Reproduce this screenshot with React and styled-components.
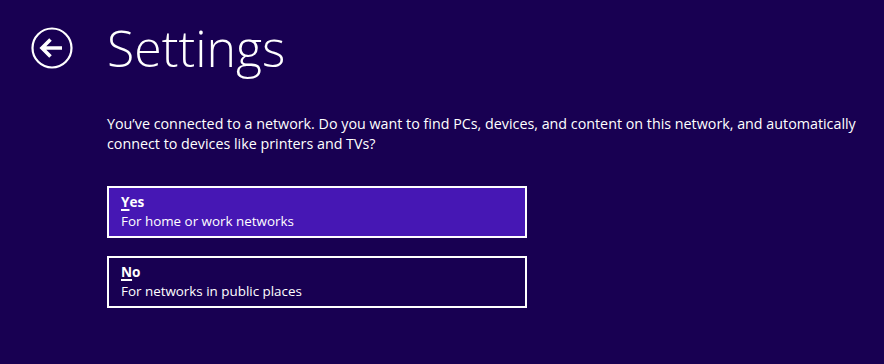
import React from 'react'
import styled, { createGlobalStyle } from 'styled-components'

const GlobalStyle = createGlobalStyle`
   html, body {
      margin: 0;
      padding: 0;
      background-color: #180052;
   }
   body {
      font-family: 'Open Sans', 'Noto Sans', sans-serif;
      color: #ffffff;
   }
`

const options = [
   { key: 'Y', rest: 'es', hint: 'For home or work networks', selected: true },
   { key: 'N', rest: 'o', hint: 'For networks in public places', selected: false },
]

const BackIcon = () => (
   <svg width="44" height="44" viewBox="0 0 44 44">
      <circle cx="22" cy="22" r="19.5" fill="none" stroke="#fff" strokeWidth="2.2" />
      <path
         d="M12 22 H32 M20.5 13.5 L12 22 L20.5 30.5"
         fill="none"
         stroke="#fff"
         strokeWidth="3.6"
         strokeLinejoin="miter"
      />
   </svg>
)

const App = () => {
   return (
      <>
         <GlobalStyle />
         <Page>
            <Header>
               <BackButton aria-label="Back">
                  <BackIcon />
               </BackButton>
               <Title>Settings</Title>
            </Header>
            <Content>
               <Question>
                  You’ve connected to a network. Do you want to find PCs, devices, and content on this
                  network, and automatically connect to devices like printers and TVs?
               </Question>
               <Options>
                  {options.map((option) => (
                     <Option key={option.key} selected={option.selected}>
                        <OptionTitle>
                           <u>{option.key}</u>
                           {option.rest}
                        </OptionTitle>
                        <OptionHint>{option.hint}</OptionHint>
                     </Option>
                  ))}
               </Options>
            </Content>
         </Page>
      </>
   )
}

const Page = styled.div`
   width: 884px;
   height: 364px;
   overflow: hidden;
   background-color: #180052;
`
const Header = styled.div`
   display: flex;
   align-items: center;
   height: 80px;
   padding: 16px 0 0 30px;
   box-sizing: border-box;
`
const BackButton = styled.button`
   display: flex;
   width: 44px;
   height: 44px;
   padding: 0;
   margin-right: 33px;
   border: none;
   background: transparent;
   cursor: pointer;
`
const Title = styled.h1`
   margin: 0;
   font-family: 'Open Sans', 'Lato', sans-serif;
   font-size: 50px;
   font-weight: 300;
   line-height: 56px;
   color: #ffffff;
`
const Content = styled.div`
   padding: 34px 0 0 107px;
   display: flex;
   flex-direction: column;
`
const Question = styled.p`
   margin: 0;
   max-width: 760px;
   font-size: 14.3px;
   line-height: 20px;
   color: #ffffff;
`
const Options = styled.div`
   display: flex;
   flex-direction: column;
   gap: 18px;
   margin-top: 32px;
`
const Option = styled.div`
   width: 420px;
   height: 52px;
   box-sizing: border-box;
   border: 2px solid #ffffff;
   padding: 4px 12px 0;
   background-color: ${(props) => (props.selected ? '#4617b4' : 'transparent')};
   cursor: pointer;
`
const OptionTitle = styled.div`
   font-size: 13.6px;
   font-weight: 700;
   line-height: 19px;
   u {
      text-decoration-thickness: 2px;
      text-underline-offset: 2px;
   }
`
const OptionHint = styled.div`
   font-size: 13.4px;
   line-height: 20px;
`

export default App
